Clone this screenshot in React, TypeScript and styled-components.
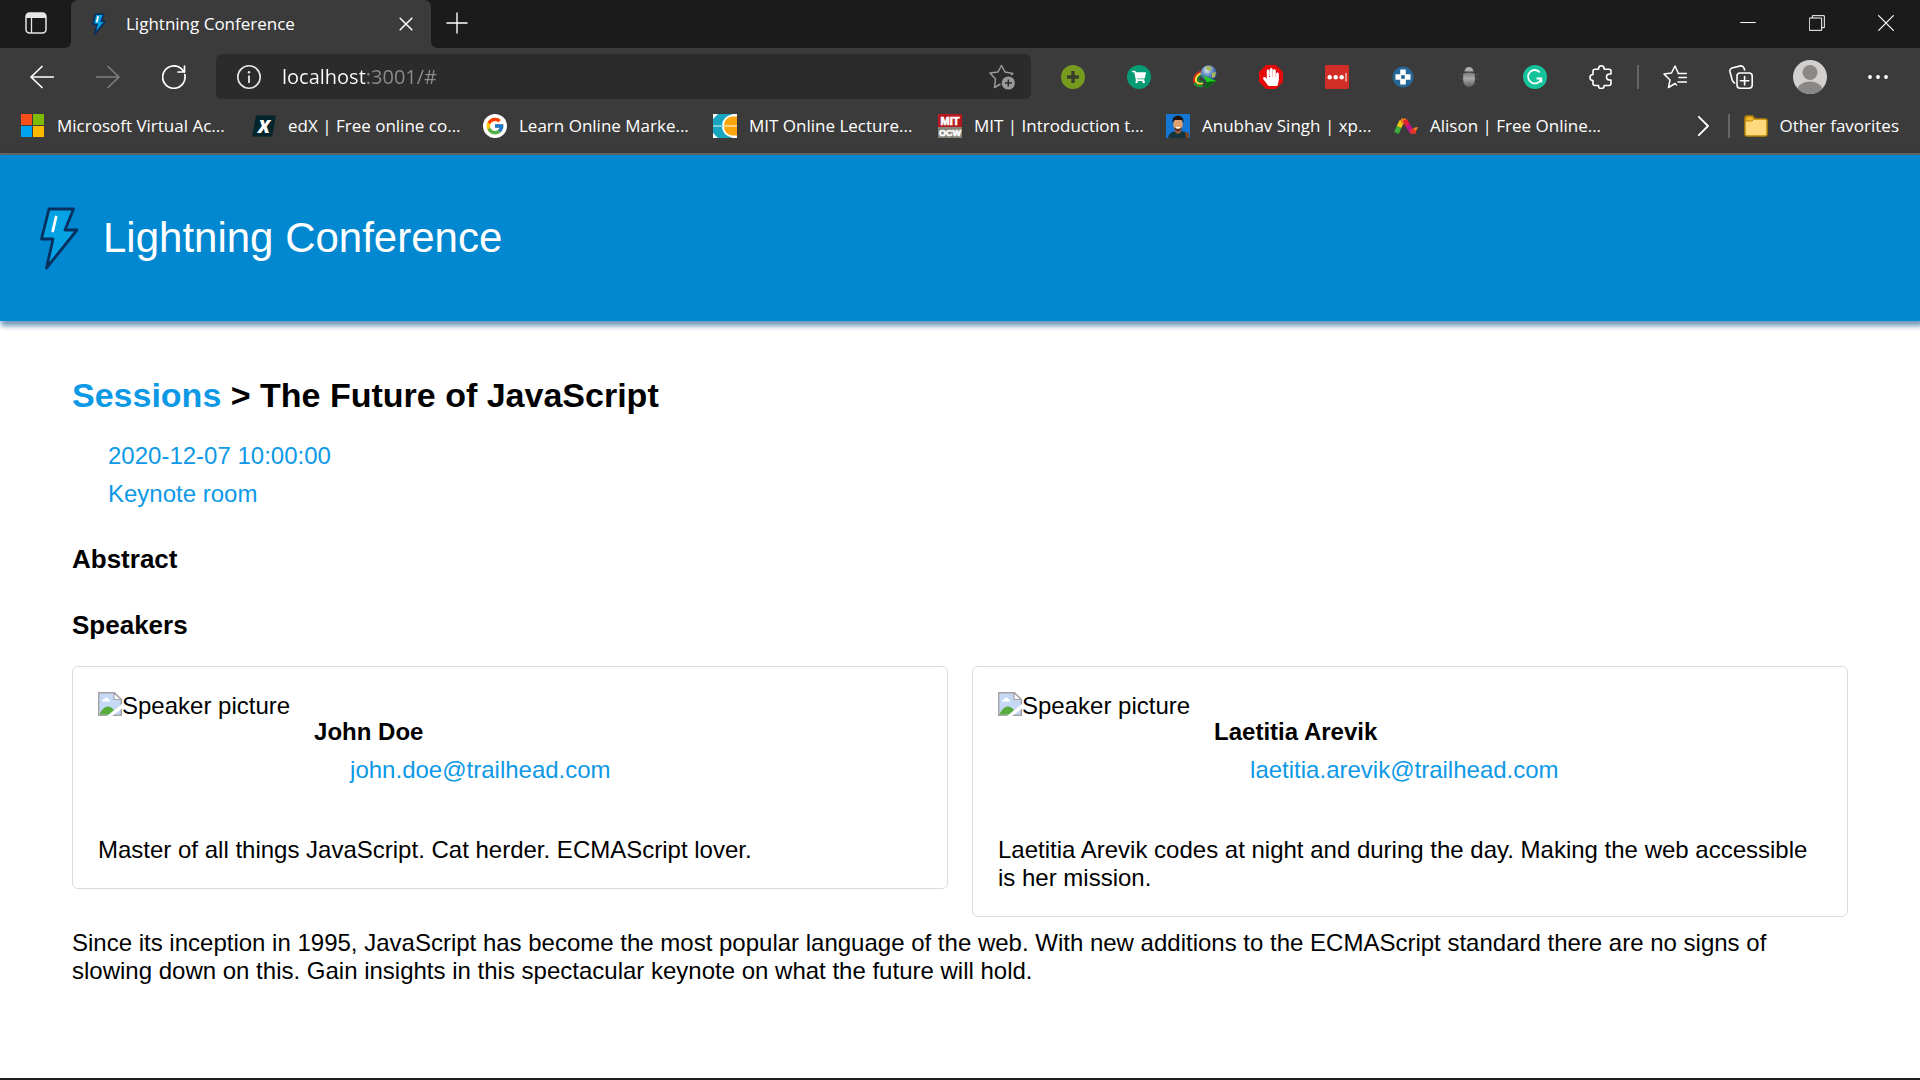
import React from "react";
import styled, { createGlobalStyle } from "styled-components";
import { FcGoogle } from "react-icons/fc";
import { FaHandPaper, FaShoppingCart } from "react-icons/fa";

const GlobalStyle = createGlobalStyle`
  * { box-sizing: border-box; }
  body {
    margin: 0;
    background: #fff;
    color: #000;
    font: 24px/28px "Liberation Sans", Arial, sans-serif;
  }
  h1, h2, h3, p { margin: 0; }
  a { text-decoration: none; }
  svg { display: block; flex: none; }
`;

const Window = styled.div`
  min-height: 100vh;
  display: flex;
  flex-direction: column;
  border-bottom: 2px solid #1f1d20;
`;

/* ---------- browser chrome ---------- */

const Chrome = styled.div`
  background: #3b3b3b;
  border-bottom: 2px solid #666;
  color: #fff;
  font: 17px/24px "Open Sans", "Noto Sans", sans-serif;
`;

const TabStrip = styled.div`
  display: flex;
  height: 48px;
  background: #1b1b1b;
`;

const IconButton = styled.button<{ $width?: number; $color?: string }>`
  flex: none;
  display: flex;
  align-items: center;
  justify-content: center;
  width: ${(p) => p.$width ?? 66}px;
  height: 45px;
  padding: 0;
  border: 0;
  background: none;
  color: ${(p) => p.$color ?? "#fff"};
`;

const Tab = styled.div`
  position: relative;
  display: flex;
  align-items: center;
  width: 360px;
  padding: 0 14px 0 19px;
  border-radius: 7px 7px 0 0;
  background: #3b3b3b;
  &::before,
  &::after {
    content: "";
    position: absolute;
    bottom: 0;
    width: 5px;
    height: 5px;
  }
  &::before {
    right: 100%;
    background: radial-gradient(circle at 0 0, transparent 4px, #3b3b3b 5px);
  }
  &::after {
    left: 100%;
    background: radial-gradient(circle at 100% 0, transparent 4px, #3b3b3b 5px);
  }
`;

const TabTitle = styled.span`
  flex: 1;
  margin-left: 18px;
`;

const WindowControls = styled.div`
  display: flex;
  margin-left: auto;
`;

const Toolbar = styled.div`
  display: flex;
  align-items: center;
  padding: 6px 9px;
`;

const AddressBar = styled.div`
  flex: 1;
  display: flex;
  align-items: center;
  height: 45px;
  margin: 0 9px;
  border-radius: 6px;
  background: #2b2b2b;
`;

const AddressInput = styled.input`
  flex: 1;
  min-width: 0;
  height: 30px;
  padding: 0;
  border: 0;
  outline: 0;
  background: linear-gradient(90deg, #fff 84px, #8c8c8c 84px);
  background-clip: text;
  -webkit-background-clip: text;
  color: transparent;
  font: 20px/30px "Open Sans", "Noto Sans", sans-serif;
`;

const Divider = styled.span`
  width: 2px;
  height: 24px;
  margin: 0 3px;
  background: #666;
`;

const Bookmarks = styled.nav`
  display: flex;
  align-items: center;
  height: 48px;
  padding: 0 21px 6px;
  white-space: nowrap;
`;

const Bookmark = styled.a<{ $width?: number }>`
  flex: none;
  display: flex;
  align-items: center;
  gap: 12px;
  width: ${(p) => (p.$width ? `${p.$width}px` : "auto")};
  color: #fff;
`;

const BookmarksEnd = styled.div`
  display: flex;
  align-items: center;
  gap: 11px;
  margin-left: auto;
`;

/* ---------- conference page ---------- */

const Banner = styled.header`
  display: flex;
  align-items: center;
  gap: 24px;
  padding: 48px 39px;
  background: #0288d1;
  box-shadow: 2px 4px 5px 1px rgba(1, 72, 132, 0.55);
  color: #fff;
  font-size: 42px;
  line-height: 70px;
`;

const Main = styled.main`
  padding: 54px 72px 0;
`;

const Title = styled.h1`
  font-size: 34px;
  line-height: 40px;
`;

const Link = styled.a`
  color: #0d99e6;
`;

const Details = styled.div`
  display: flex;
  flex-direction: column;
  gap: 10px;
  padding: 27px 36px 0;
  color: #0d99e6;
`;

const SectionTitle = styled.h2`
  margin-top: 36px;
  font-size: 26px;
  line-height: 30px;
`;

const Speakers = styled.div`
  display: grid;
  grid-template-columns: 1fr 1fr;
  align-items: start;
  gap: 24px;
  margin: 26px 0 12px;
`;

const Card = styled.article`
  padding: 25px 25px 24px;
  border: 1px solid #dddbda;
  border-radius: 6px;
`;

const CardHead = styled.div`
  display: flex;
  gap: 24px;
`;

const Picture = styled.div`
  display: flex;
  height: 28px;
`;

const Person = styled.div`
  display: flex;
  flex-direction: column;
  gap: 10px;
  padding: 26px 0 52px;
`;

const Name = styled.h3`
  font-size: 24px;
  line-height: 28px;
`;

const Email = styled(Link)`
  padding-left: 36px;
`;

/* ---------- drawings ---------- */

const Line = ({ d, size = 24, w = 1.6 }: { d: string; size?: number; w?: number }) => (
  <svg width={size} height={size} viewBox="0 0 24 24" fill="none" stroke="currentColor" strokeWidth={w} strokeLinecap="round" strokeLinejoin="round">
    <path d={d} />
  </svg>
);

const Bolt = ({ width, height, stroke = 2.8 }: { width: number; height: number; stroke?: number }) => (
  <svg width={width} height={height} viewBox="0 0 40 64">
    <path d="M10 3H34.500L26 24H38L7.500 62 14 33H2.500Z" fill="#05a3e4" stroke="#05305f" strokeWidth={stroke} strokeLinejoin="round" />
    <path d="M17 11 13.800 25" stroke="#fff" strokeWidth={stroke} strokeLinecap="round" />
  </svg>
);

const TabActions = () => (
  <svg width="22" height="22" viewBox="0 0 22 22">
    <rect x="1" y="1" width="20" height="20" rx="3.500" fill="none" stroke="#e6e6e6" strokeWidth="1.500" />
    <path d="M1 6V4Q1 1 4 1H18Q21 1 21 4V6Z" fill="#e6e6e6" />
    <path d="M6.500 6V21" stroke="#e6e6e6" strokeWidth="1.300" />
  </svg>
);

const Info = () => (
  <svg width="24" height="24" viewBox="0 0 24 24" fill="none" stroke="#e8e8e8" strokeWidth="1.600">
    <circle cx="12" cy="12" r="11.200" />
    <path d="M12 10.500V18" strokeWidth="1.800" />
    <circle cx="12" cy="7.200" r="1.200" fill="#e8e8e8" stroke="none" />
  </svg>
);

const AddFavorite = () => (
  <svg width="26" height="26" viewBox="0 0 26 26" fill="none" stroke="#9a9a9a" strokeWidth="1.500" strokeLinejoin="round">
    <path d="M11.500 20 5.500 23.500 6.500 15 1 9 9 8 12.500 1.500 16 8 24 9.500 22 11" />
    <circle cx="19.300" cy="19" r="6.600" fill="#9a9a9a" stroke="none" />
    <path d="M19.300 15.500V22.500M15.800 19H22.800" stroke="#2b2b2b" />
  </svg>
);

const PlusBadge = () => (
  <svg width="24" height="24" viewBox="0 0 24 24">
    <circle cx="12" cy="12" r="12" fill="#769b1f" />
    <path d="M12 6V18M6 12H18" stroke="#3a3f2c" strokeWidth="3.400" />
  </svg>
);

const CartBadge = () => (
  <svg width="24" height="24" viewBox="0 0 24 24">
    <circle cx="12" cy="12" r="12" fill="#079b75" />
    <FaShoppingCart x="5" y="5" size={14} color="#fff" />
  </svg>
);

const GlobeArrow = () => (
  <svg width="24" height="24" viewBox="0 0 24 24" fill="none">
    <defs>
      <radialGradient id="globe" cx=".4" cy=".3" r=".75">
        <stop offset="0" stopColor="#e8f0f4" />
        <stop offset=".4" stopColor="#6f97c8" />
        <stop offset="1" stopColor="#173b86" />
      </radialGradient>
    </defs>
    <path d="M10 6Q0 9 1 16.500 3 21.500 9 19.500" stroke="#d92d18" strokeWidth="2" />
    <path d="M10.500 7.500Q2 10 3 16 4.500 19.500 10 18" stroke="#f5e03a" strokeWidth="2" />
    <path d="M11 9.500Q4.500 11.500 5 15.500 6 17.500 11 16.500" stroke="#1d7f36" strokeWidth="2" />
    <path d="M1.500 18Q4 22.500 10 20.500" stroke="#1f8f36" strokeWidth="2.400" />
    <circle cx="15.700" cy="8.300" r="8" fill="url(#globe)" />
    <path d="M13 1.500Q17 .5 19 2.500L17 6 13.500 5ZM19 8 23 7 22 12 19 13Z" fill="#a9b65a" />
    <path d="M10 10.500 23.500 16 12 24 13.500 17Z" fill="#1fcf1c" />
    <path d="M12 24 13.500 17 23.500 16Z" fill="#0b5f14" />
  </svg>
);

const StopHand = () => (
  <svg width="24" height="24" viewBox="0 0 24 24">
    <path d="M7 0H17L24 7V17L17 24H7L0 17V7Z" fill="#e60b0b" />
    <FaHandPaper x="3" y="3" size={18} color="#fff" />
  </svg>
);

const DotsBadge = () => (
  <svg width="24" height="24" viewBox="0 0 24 24" fill="#fff">
    <rect width="24" height="24" rx="1.500" fill="#d32d27" />
    <circle cx="4.700" cy="12.300" r="2.200" />
    <circle cx="10.700" cy="12.300" r="2.200" />
    <circle cx="16.700" cy="12.300" r="2.200" />
    <path d="M20.500 8H21.500V16.500H20.500Z" />
  </svg>
);

const CrossBadge = () => (
  <svg width="22" height="22" viewBox="0 0 22 22">
    <circle cx="11" cy="11" r="10.500" fill="#256794" />
    <path d="M8.200 3.500H13.800V8.200H18.500V13.800H13.800V18.500H8.200V13.800H3.500V8.200H8.200Z" fill="#fff" />
    <rect x="9.200" y="9.200" width="3.600" height="3.600" fill="#256794" />
  </svg>
);

const Bug = () => (
  <svg width="20" height="22" viewBox="0 0 20 22">
    <defs>
      <linearGradient id="bug" x2="0" y2="1">
        <stop offset="0" stopColor="#777" />
        <stop offset=".4" stopColor="#aaa" />
        <stop offset="1" stopColor="#5c5c5c" />
      </linearGradient>
    </defs>
    <path d="M0 8 4 9M0 13H4M1 19 5 17M20 8 16 9M20 13H16M19 19 15 17" stroke="#484848" strokeWidth="1.300" />
    <path d="M5.500 5.500Q6 1 10 1T14.500 5.500Z" fill="#ababab" />
    <path d="M4.500 7.500Q10 5.500 15.500 7.500 17.500 20.500 10 21 2.500 20.500 4.500 7.500Z" fill="url(#bug)" />
  </svg>
);

const GreenG = () => (
  <svg width="24" height="24" viewBox="0 0 24 24" fill="none" stroke="#fff" strokeWidth="1.800">
    <circle cx="12" cy="12" r="12" fill="#15c39a" stroke="none" />
    <path d="M16.800 7.300A6.700 6.700 0 1 0 18.200 13.500H13.500M18.300 13V17.500" />
  </svg>
);

const Favorites = () => (
  <Line w={1.5} d="M13.500 20 12 18.500 5.500 22.500 7 15 1 9 8.500 8 12 1 15 7.500M15 8.500H23.500M16 12.500H23.500M15 17H23.500" />
);

const Collections = () => (
  <Line w={1.6} d="M11 8H20Q23.200 8 23.200 11V20Q23.200 23.200 20 23.200H11Q8 23.200 8 20V11Q8 8 11 8ZM15.600 11.500V20M11.400 15.700H19.800M5.500 18Q3.800 17 3.200 15L.9 6.500Q.4 4 3 3L11.500 .9Q14 .6 15 3L15.600 5" />
);

const Puzzle = () => (
  <Line w={1.6} d="M6 4.200H9.500Q9.500 .8 12.300 .8T15.200 4.200H20Q22 4.200 22 6V9Q17.500 8.500 17.500 12T22 15V18.500Q22 20.500 20 20.500H15.200Q15.200 23.500 12.300 23.500T9.500 20.500H6Q4 20.500 4 18.500V15.500Q1 15.500 1 12.500T4 9.500V6.200Q4 4.200 6 4.200Z" />
);

const Avatar = () => (
  <svg width="34" height="34" viewBox="0 0 34 34">
    <defs>
      <clipPath id="avatar"><circle cx="17" cy="17" r="17" /></clipPath>
    </defs>
    <g clipPath="url(#avatar)">
      <rect width="34" height="34" fill="#d2d0ce" />
      <circle cx="17" cy="12.500" r="7.500" fill="#8a8886" />
      <ellipse cx="17" cy="30" rx="12.500" ry="8.500" fill="#8a8886" />
    </g>
  </svg>
);

const More = () => (
  <svg width="22" height="6" viewBox="0 0 22 6" fill="#fff">
    <circle cx="3" cy="3" r="1.900" />
    <circle cx="11" cy="3" r="1.900" />
    <circle cx="19" cy="3" r="1.900" />
  </svg>
);

const MicrosoftLogo = () => (
  <svg width="24" height="24" viewBox="0 0 24 24">
    <path d="M0 0H11V11H0Z" fill="#fb4f1b" />
    <path d="M12 0H23V11H12Z" fill="#7eba00" />
    <path d="M0 12H11V23H0Z" fill="#00a3ee" />
    <path d="M12 12H23V23H12Z" fill="#ffb800" />
  </svg>
);

const EdxLogo = () => (
  <svg width="24" height="24" viewBox="0 0 24 24" overflow="visible">
    <path d="M4 1.500H24L20 22.500H0Z" fill="#02262b" />
    <text x="12" y="18.500" textAnchor="middle" fontFamily="Open Sans, sans-serif" fontSize="18" fontWeight="800" fontStyle="italic" fill="#fff">X</text>
  </svg>
);

const GoogleLogo = () => (
  <svg width="24" height="24" viewBox="0 0 24 24">
    <circle cx="12" cy="12" r="12" fill="#fff" />
    <FcGoogle x="2" y="2" size={20} />
  </svg>
);

const LectureLogo = () => (
  <svg width="24" height="24" viewBox="0 0 24 24">
    <rect width="24" height="24" fill="#fff" />
    <path d="M5 0H20C12 2 9 7 9 12S12 22 20 24H5L0 19V5Z" fill="#18a5bf" />
    <path d="M24 2.500H20C14 2.500 11 7 11 12S14 21.500 20 21.500H24Z" fill="#fda50d" />
    <path d="M0 11H10V13H0Z" fill="#7fd0de" />
    <path d="M11 11H24V13H11Z" fill="#ffd27d" />
  </svg>
);

const OcwLogo = () => (
  <svg width="24" height="24" viewBox="0 0 24 24" overflow="visible" fontFamily="Liberation Sans, sans-serif" fontWeight="700" fill="#fff" textAnchor="middle">
    <rect width="24" height="13" fill="#b3191f" />
    <rect y="13" width="24" height="11" fill="#85857b" />
    <text x="12" y="11" fontSize="11" stroke="#fff" strokeWidth=".7">MIT</text>
    <text x="12" y="22" fontSize="9" stroke="#fff" strokeWidth=".6">OCW</text>
  </svg>
);

const Portrait = () => (
  <svg width="24" height="24" viewBox="0 0 24 24">
    <rect width="24" height="24" fill="#1477d4" />
    <path d="M2 24Q3 18 9 17.500L15 17Q22 17.500 23 24Z" fill="#17343a" />
    <path d="M19 18 23 19V24H20Z" fill="#7a4527" />
    <path d="M9 13H15V18L12 20 9 18Z" fill="#a9653e" />
    <ellipse cx="12" cy="10.500" rx="4.700" ry="6.200" fill="#e0a06c" />
    <path d="M6.500 9Q5.500 2 12 1.500 18.500 2 17.300 9L16 6H8.500Z" fill="#21140f" />
    <path d="M8 13.500Q12 15.500 16 13.500 15 17.500 12 17.500T8 13.500Z" fill="#5b3421" />
    <path d="M10 13H14V14.500H10Z" fill="#fff" />
  </svg>
);

const AlisonLogo = () => (
  <svg width="24" height="24" viewBox="0 0 24 24" strokeWidth="5" fill="none">
    <path d="M2.500 19 5 13" stroke="#3fae3c" />
    <path d="M5 13 8 7" stroke="#f3c80f" />
    <path d="M7 7H12" stroke="#ef7d1a" />
    <path d="M11 6 14.500 13" stroke="#e0232e" />
    <path d="M13.500 11 18 18" stroke="#b4178a" />
    <path d="M16.500 17.500 22 17" stroke="#e6352b" />
    <path d="M19 14 24 13 22 17Z" fill="#f58220" />
  </svg>
);

const Folder = () => (
  <svg width="24" height="22" viewBox="0 0 24 22">
    <path d="M1 4Q1 1 3 1H8.500L11 4H21Q23 4 23 6V19Q23 21 21 21H3Q1 21 1 19Z" fill="#ffd97b" stroke="#b98509" strokeWidth="1.500" />
    <path d="M1.700 3.500Q2 1.700 3.500 1.700H8L10 4 8 6H1.700Z" fill="#f3bd2b" stroke="#b98509" />
  </svg>
);

const BrokenImage = () => (
  <svg width="24" height="24" viewBox="0 0 24 24">
    <path d="M.7 .7H16.500L23.300 7.500V23.300H.7Z" fill="#c5d8f6" stroke="#a3a3a3" strokeWidth="1.400" />
    <path d="M4 9.500Q4 7 6.500 7 8 4 10 6.500 12 7 12 9.500Z" fill="#fff" />
    <path d="M1.500 22.500Q4 16 9 14.500 13 14 16 18L12 22.500Z" fill="#56ad3a" />
    <path d="M16 .7V7.500H23.300Z" fill="#fff" stroke="#a3a3a3" strokeWidth="1.200" />
    <path d="M24 12 9 24H14L24 16.500Z" fill="#fff" />
  </svg>
);

/* ---------- data ---------- */

const extensions = [
  { label: "Add", icon: <PlusBadge /> },
  { label: "Shopping", icon: <CartBadge /> },
  { label: "Download manager", icon: <GlobeArrow /> },
  { label: "Ad blocker", icon: <StopHand /> },
  { label: "Password manager", icon: <DotsBadge /> },
  { label: "Health", icon: <CrossBadge /> },
  { label: "Debugger", icon: <Bug /> },
  { label: "Writing assistant", icon: <GreenG /> },
  { label: "Extensions", icon: <Puzzle /> },
];

const bookmarks = [
  { text: "Microsoft Virtual Ac...", width: 231, icon: <MicrosoftLogo /> },
  { text: "edX | Free online co...", width: 231, icon: <EdxLogo /> },
  { text: "Learn Online Marke...", width: 230, icon: <GoogleLogo /> },
  { text: "MIT Online Lecture...", width: 225, icon: <LectureLogo /> },
  { text: "MIT | Introduction t...", width: 228, icon: <OcwLogo /> },
  { text: "Anubhav Singh | xp...", width: 228, icon: <Portrait /> },
  { text: "Alison | Free Online...", width: 228, icon: <AlisonLogo /> },
];

const speakers = [
  {
    name: "John Doe",
    email: "john.doe@trailhead.com",
    bio: "Master of all things JavaScript. Cat herder. ECMAScript lover.",
  },
  {
    name: "Laetitia Arevik",
    email: "laetitia.arevik@trailhead.com",
    bio: "Laetitia Arevik codes at night and during the day. Making the web accessible is her mission.",
  },
];

export default function App() {
  return (
    <Window>
      <GlobalStyle />
      <Chrome>
        <TabStrip>
          <IconButton $width={71} aria-label="Tab actions"><TabActions /></IconButton>
          <Tab>
            <Bolt width={18} height={22} stroke={5} />
            <TabTitle>Lightning Conference</TabTitle>
            <IconButton $width={22} aria-label="Close tab"><Line size={14} w={2.6} d="M2 2 22 22M22 2 2 22" /></IconButton>
          </Tab>
          <IconButton $width={52} aria-label="New tab"><Line size={22} w={1.5} d="M12 1V23M1 12H23" /></IconButton>
          <WindowControls>
            <IconButton $width={69} aria-label="Minimize"><Line size={16} w={1.5} d="M1 11.300H23" /></IconButton>
            <IconButton $width={69} aria-label="Restore"><Line size={16} w={1.5} d="M1 4.500H19V23H1ZM5 4V1H23V19H19.500" /></IconButton>
            <IconButton $width={69} aria-label="Close"><Line size={16} w={1.8} d="M1 1 23 23M23 1 1 23" /></IconButton>
          </WindowControls>
        </TabStrip>

        <Toolbar>
          <IconButton aria-label="Back"><Line w={1.7} d="M23.500 12H1M12 1.500 1 12 12 22.500" /></IconButton>
          <IconButton aria-label="Forward" $color="#7d7d7d"><Line w={1.7} d="M.5 12H23M12 1.500 23 12 12 22.500" /></IconButton>
          <IconButton aria-label="Refresh"><Line w={1.7} d="M22.800 9.500A11.200 11.200 0 1 1 19 3.400L22.500 7M22.500 1V7H16" /></IconButton>
          <AddressBar>
            <IconButton aria-label="Site information"><Info /></IconButton>
            <AddressInput aria-label="Address" defaultValue="localhost:3001/#" spellCheck={false} />
            <IconButton $width={58} aria-label="Add to favorites"><AddFavorite /></IconButton>
          </AddressBar>
          {extensions.map((e) => (
            <IconButton key={e.label} aria-label={e.label}>{e.icon}</IconButton>
          ))}
          <Divider />
          <IconButton aria-label="Favorites"><Favorites /></IconButton>
          <IconButton aria-label="Collections"><Collections /></IconButton>
          <IconButton $width={71} aria-label="Profile"><Avatar /></IconButton>
          <IconButton aria-label="Settings and more"><More /></IconButton>
        </Toolbar>

        <Bookmarks aria-label="Favorites bar">
          {bookmarks.map((b) => (
            <Bookmark key={b.text} href="#" $width={b.width}>{b.icon}{b.text}</Bookmark>
          ))}
          <BookmarksEnd>
            <IconButton $width={22} aria-label="More favorites"><Line size={20} w={2.2} d="M7 1 18 12 7 23" /></IconButton>
            <Divider />
            <Bookmark href="#"><Folder />Other favorites</Bookmark>
          </BookmarksEnd>
        </Bookmarks>
      </Chrome>

      <Banner>
        <Bolt width={40} height={64} />
        Lightning Conference
      </Banner>

      <Main>
        <Title><Link href="#">Sessions</Link> &gt; The Future of JavaScript</Title>
        <Details>
          <span>2020-12-07 10:00:00</span>
          <span>Keynote room</span>
        </Details>
        <SectionTitle>Abstract</SectionTitle>
        <SectionTitle>Speakers</SectionTitle>
        <Speakers>
          {speakers.map((s) => (
            <Card key={s.name}>
              <CardHead>
                <Picture><BrokenImage />Speaker picture</Picture>
                <Person>
                  <Name>{s.name}</Name>
                  <Email href={`mailto:${s.email}`}>{s.email}</Email>
                </Person>
              </CardHead>
              <p>{s.bio}</p>
            </Card>
          ))}
        </Speakers>
        <p>
          Since its inception in 1995, JavaScript has become the most popular language of the web. With new additions to
          the ECMAScript standard there are no signs of slowing down on this. Gain insights in this spectacular keynote
          on what the future will hold.
        </p>
      </Main>
    </Window>
  );
}
